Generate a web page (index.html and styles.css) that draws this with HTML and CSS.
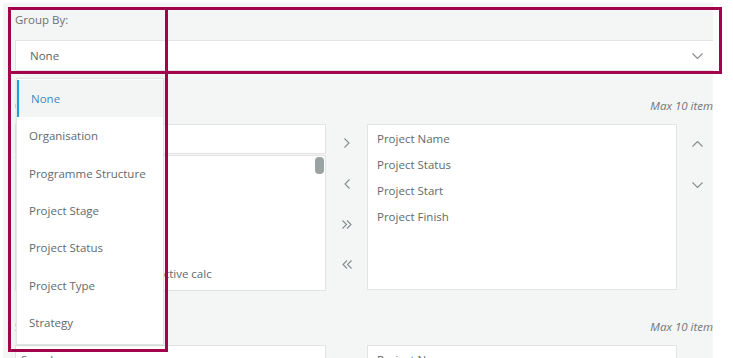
FILE: index.html
```html
<!DOCTYPE html>
<html lang="en">
<head>
    <meta charset="UTF-8">
    <meta name="viewport" content="width=device-width, initial-scale=1.0">
    <title>Group By</title>
    <link rel="stylesheet" href="styles.css">
</head>
<body>
    <div class="panel">
        <div class="content">
            <div class="field">
                <div class="field-label">Group By:</div>
                <div class="select">
                    <span>None</span>
                    <svg class="caret" width="11" height="6" viewBox="0 0 11 6"><path d="M0.5 0.5 L5.5 5.5 L10.5 0.5" /></svg>
                </div>
            </div>

            <div class="picker">
                <div class="picker-head">
                    <span class="picker-title">Columns</span>
                    <span class="max">Max 10 items</span>
                </div>
                <div class="picker-body">
                    <div class="source">
                        <div class="search">Search</div>
                        <div class="list source-list">
                            <div class="item">Organisation</div>
                            <div class="item">Programme</div>
                            <div class="item">Project Manager</div>
                            <div class="item">Project Budget</div>
                            <div class="item">Portfolios Strategic Objective calc</div>
                            <div class="thumb"></div>
                        </div>
                    </div>
                    <div class="moves">
                        <svg width="6" height="10" viewBox="0 0 6 10"><path d="M0.5 0.5 L5 5 L0.5 9.5" /></svg>
                        <svg width="6" height="10" viewBox="0 0 6 10"><path d="M5.5 0.5 L1 5 L5.5 9.5" /></svg>
                        <svg width="10" height="9" viewBox="0 0 10 9"><path d="M0.5 0.5 L4.5 4.5 L0.5 8.5 M5 0.5 L9 4.5 L5 8.5" /></svg>
                        <svg width="10" height="9" viewBox="0 0 10 9"><path d="M9.5 0.5 L5.5 4.5 L9.5 8.5 M5 0.5 L1 4.5 L5 8.5" /></svg>
                    </div>
                    <div class="list target-list">
                        <div class="item">Project Name</div>
                        <div class="item">Project Status</div>
                        <div class="item">Project Start</div>
                        <div class="item">Project Finish</div>
                    </div>
                    <div class="order">
                        <svg width="11" height="6" viewBox="0 0 11 6"><path d="M0.5 5.5 L5.5 0.5 L10.5 5.5" /></svg>
                        <svg width="11" height="6" viewBox="0 0 11 6"><path d="M0.5 0.5 L5.5 5.5 L10.5 0.5" /></svg>
                    </div>
                </div>
            </div>

            <div class="picker">
                <div class="picker-head">
                    <span class="picker-title">Sort By</span>
                    <span class="max">Max 10 items</span>
                </div>
                <div class="picker-body">
                    <div class="source">
                        <div class="search">Search</div>
                    </div>
                    <div class="moves"></div>
                    <div class="list target-list">
                        <div class="item">Project Name</div>
                    </div>
                </div>
            </div>
        </div>

        <!-- Menú abierto del selector -->
        <ul class="dropdown">
            <li class="option selected">None</li>
            <li class="option">Organisation</li>
            <li class="option">Programme Structure</li>
            <li class="option">Project Stage</li>
            <li class="option">Project Status</li>
            <li class="option">Project Type</li>
            <li class="option">Strategy</li>
        </ul>
    </div>

    <!-- Marcas de anotación -->
    <div class="mark mark-wide"></div>
    <div class="mark mark-tall"></div>
</body>
</html>
```

FILE: styles.css
```css
body {
    margin: 0;
    background: white;
    font-family: "Open Sans", "Noto Sans", sans-serif;
    font-size: 11.5px;
    color: #626a6c;
}
.panel {
    position: relative;
    margin: 3px 0 0 3px;
    width: 710px;
    height: 355px;
    background: #f4f5f5;
    overflow: hidden;
}
.content {
    width: 704px;
    padding: 9px 0 0 12px;
}
.field-label {
    line-height: 16px;
    color: #6b7274;
}
.select {
    display: flex;
    align-items: center;
    justify-content: space-between;
    margin-top: 12px;
    height: 29px;
    padding: 0 15px 0 14px;
    background: white;
    border: 1px solid #e2e4e4;
    color: #5c6466;
}
.caret,
.moves svg,
.order svg {
    fill: none;
    stroke: #858c8e;
    stroke-width: 1.1;
}
.picker {
    margin-top: 27px;
}
.picker + .picker {
    margin-top: 28px;
}
.picker-head {
    display: flex;
    justify-content: space-between;
    height: 16px;
    line-height: 16px;
    margin-bottom: 10px;
}
.max {
    font-style: italic;
    color: #6f7678;
    margin-right: 1px;
}
.picker-body {
    display: flex;
    align-items: flex-start;
}
.source {
    width: 311px;
}
.search {
    height: 28px;
    line-height: 28px;
    padding-left: 5px;
    background: white;
    border: 1px solid #e2e4e4;
    color: #6b7274;
}
.list {
    background: white;
    border: 1px solid #e2e4e4;
    box-sizing: border-box;
}
.source-list {
    position: relative;
    height: 136px;
    margin-top: 1px;
    padding: 1px 0 0 18px;
    overflow: hidden;
}
.thumb {
    position: absolute;
    top: 1px;
    right: 1px;
    width: 9px;
    height: 17px;
    border-radius: 4px;
    background: #9aa2a2;
}
.item {
    height: 26px;
    line-height: 26px;
    white-space: nowrap;
}
.target-list {
    width: 310px;
    height: 166px;
    padding: 1px 0 0 9px;
}
.moves {
    width: 41px;
    display: flex;
    flex-direction: column;
    align-items: center;
    gap: 31px;
    padding-top: 14px;
}
.order {
    width: 41px;
    display: flex;
    flex-direction: column;
    align-items: center;
    gap: 35px;
    padding-top: 17px;
}
.dropdown {
    position: absolute;
    left: 13px;
    top: 75px;
    width: 148px;
    height: 267px;
    margin: 0;
    padding: 1px 0 0 0;
    list-style: none;
    background: white;
    box-sizing: border-box;
    border: 1px solid #e3e5e5;
    box-shadow: 0 1px 3px rgba(0, 0, 0, 0.08);
}
.option {
    height: 37.33px;
    line-height: 37.33px;
    padding-left: 12px;
    white-space: nowrap;
}
.selected {
    background: #f3f5f5;
    color: #3a8bc4;
    border-left: 2px solid #1aa1e0;
    padding-left: 12px;
}
.mark {
    position: absolute;
    border: 3px solid #a2034a;
    pointer-events: none;
}
.mark-wide {
    left: 8px;
    top: 7px;
    width: 708px;
    height: 61px;
}
.mark-tall {
    left: 8px;
    top: 7px;
    width: 154px;
    height: 339px;
}
```
